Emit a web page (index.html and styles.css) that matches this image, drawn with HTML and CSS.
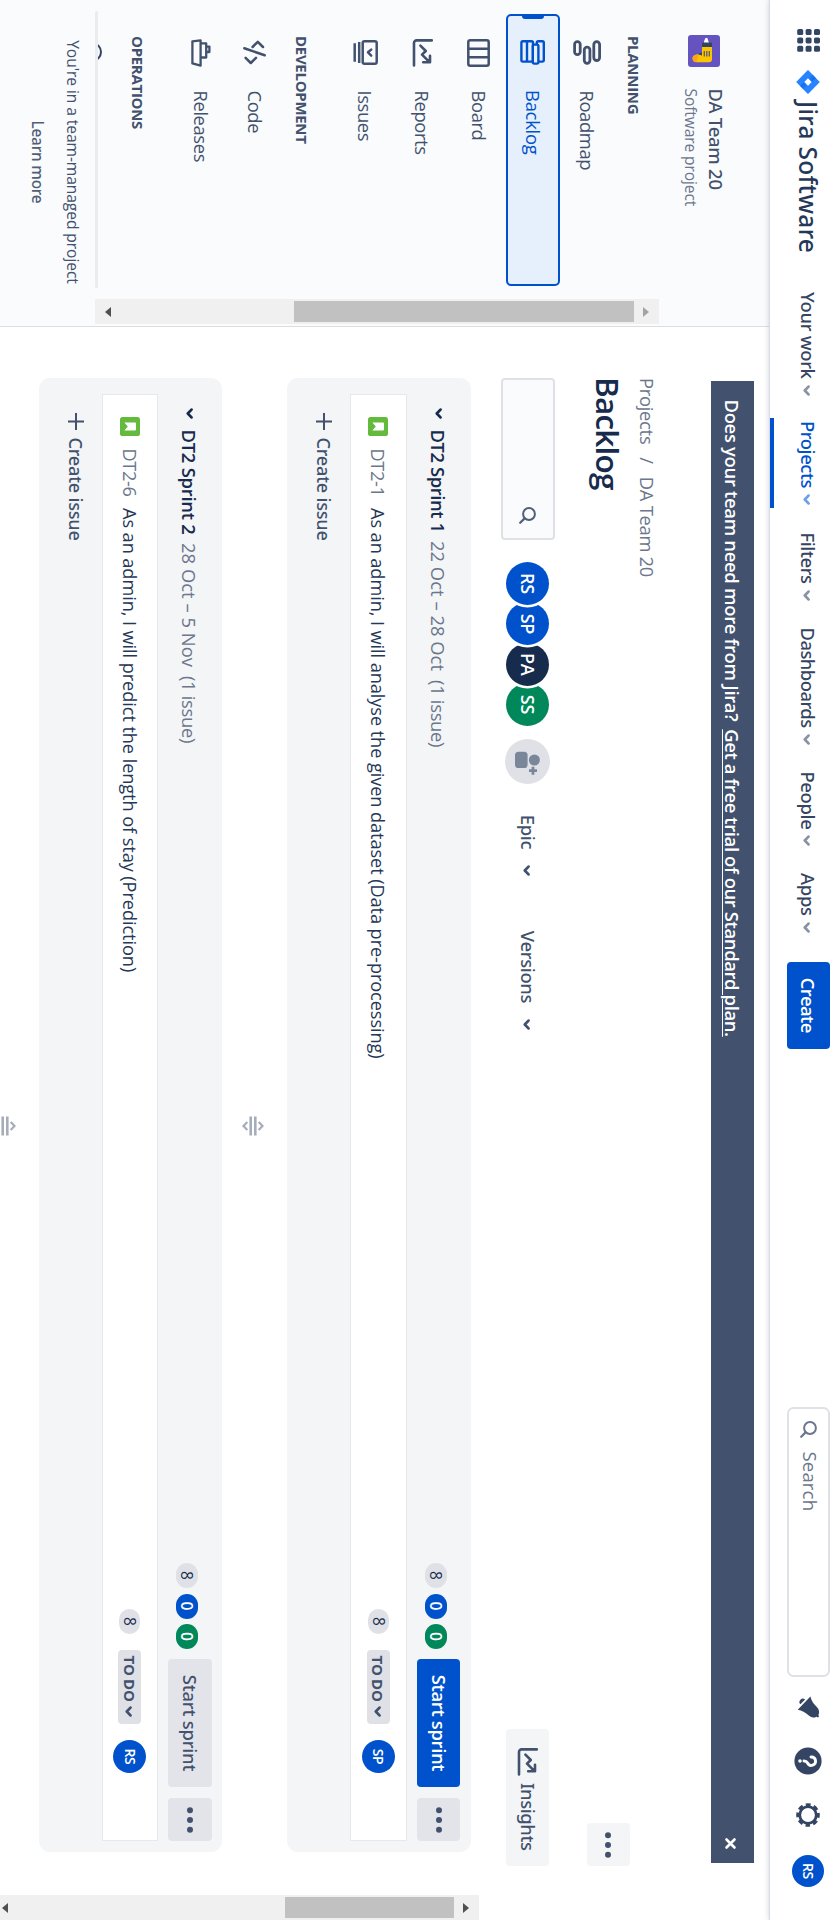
FILE: index.html
```html
<!DOCTYPE html>
<html lang="en">
<head>
<meta charset="utf-8">
<title>Backlog - DA Team 20</title>
<link rel="stylesheet" href="styles.css">
</head>
<body>
<svg class="defs" width="0" height="0" aria-hidden="true">
  <symbol id="chev" viewBox="0 0 11 7"><path d="M1.6 1.5 5.5 5.2 9.4 1.5" fill="none" stroke="currentColor" stroke-width="2.7" stroke-linecap="round" stroke-linejoin="round"/></symbol>
  <symbol id="search" viewBox="0 0 17 17"><circle cx="7" cy="7" r="5.9" fill="none" stroke="currentColor" stroke-width="2"/><path d="M11.4 11.4 15.8 15.8" stroke="currentColor" stroke-width="2.2" stroke-linecap="round"/></symbol>
  <symbol id="chart" viewBox="0 0 28 21"><path d="M1.4 1.2V16.4a2.6 2.6 0 0 0 2.6 2.6H26.4" fill="none" stroke="currentColor" stroke-width="2.6" stroke-linecap="round"/><path d="M6.6 12.6 12 7.2 15.6 11 22.6 4M16.8 3H23.3V9.8" fill="none" stroke="currentColor" stroke-width="2.6" stroke-linecap="round" stroke-linejoin="round"/></symbol>
  <symbol id="dots" viewBox="0 0 26 6"><g fill="currentColor"><circle cx="3.3" cy="3" r="3"/><circle cx="13" cy="3" r="3"/><circle cx="22.7" cy="3" r="3"/></g></symbol>
  <symbol id="plus" viewBox="0 0 17 16"><path d="M8.5 0V16M0 8H17" stroke="currentColor" stroke-width="2"/></symbol>
  <symbol id="story" viewBox="0 0 19 20"><rect width="19" height="20" rx="2.6" fill="#63ba3c"/><path d="M5.4 5a1 1 0 0 1 1-1h6.2a1 1 0 0 1 1 1V15.6L9.5 12.2 5.4 15.6Z" fill="#fff"/></symbol>
  <symbol id="handle" viewBox="0 0 20 24"><path d="M6 6.3 10 2.5 14 6.3M6 17.7 10 21.5 14 17.7" fill="none" stroke="currentColor" stroke-width="2.2"/><path d="M.6 9.7H19.4M.6 14.3H19.4" stroke="currentColor" stroke-width="2.6"/></symbol>
</svg>
<div class="screen">
  <header class="topbar">
    <svg class="apps" viewBox="0 0 23 23"><g fill="#344563"><rect width="6" height="6" rx="1.6"/><rect x="8.4" width="6" height="6" rx="1.6"/><rect x="16.8" width="6" height="6" rx="1.6"/><rect y="8.4" width="6" height="6" rx="1.6"/><rect x="8.4" y="8.4" width="6" height="6" rx="1.6"/><rect x="16.8" y="8.4" width="6" height="6" rx="1.6"/><rect y="16.8" width="6" height="6" rx="1.6"/><rect x="8.4" y="16.8" width="6" height="6" rx="1.6"/><rect x="16.8" y="16.8" width="6" height="6" rx="1.6"/></g></svg>
    <svg class="logo" viewBox="0 0 24 24">
      <defs><linearGradient id="g1" x1="1" y1="0" x2=".3" y2="1"><stop offset="0" stop-color="#0052cc"/><stop offset="1" stop-color="#2684ff"/></linearGradient><linearGradient id="g2" x1="0" y1="1" x2=".7" y2="0"><stop offset="0" stop-color="#0052cc"/><stop offset="1" stop-color="#2684ff"/></linearGradient></defs>
      <path d="M12 .2 23.4 11.4a.9.9 0 0 1 0 1.2L12 23.8.6 12.6a.9.9 0 0 1 0-1.2Z" fill="#2684ff"/>
      <path d="M12 8.2 8.2 12 4.6 7.4 8 4.200Z" fill="url(#g1)" opacity=".7"/>
      <path d="M12 15.8 15.8 12 19.4 16.6 16 19.800Z" fill="url(#g2)" opacity=".7"/>
      <path d="M12 8.3 15.7 12 12 15.7 8.3 12Z" fill="#fff"/>
    </svg>
    <span class="brand">Jira Software</span>
    <nav class="nav">
      <a class="n-work">Your work<svg class="chev"><use href="#chev"/></svg></a>
      <a class="n-projects active">Projects<svg class="chev"><use href="#chev"/></svg></a>
      <a class="n-filters">Filters<svg class="chev"><use href="#chev"/></svg></a>
      <a class="n-dash">Dashboards<svg class="chev"><use href="#chev"/></svg></a>
      <a class="n-people">People<svg class="chev"><use href="#chev"/></svg></a>
      <a class="n-apps">Apps<svg class="chev"><use href="#chev"/></svg></a>
    </nav>
    <button class="create">Create</button>
    <div class="search"><svg><use href="#search"/></svg><span>Search</span></div>
    <svg class="bell" viewBox="0 0 22 23"><path d="M.6 9.6C5 8.6 8 6.4 10.8 3.4 13.4.7 16.6.2 18.9 1.6L20.4 1l1 1-.7 1.6C22.4 6.400 21.600 9.300 19.100 11.800 16.100 14.800 14.600 17.800 13.700 22.300Z" fill="#344563"/><path d="M3.400 14.900 8.300 19.600A3.400 3.400 0 0 1 3.400 14.900Z" fill="#344563"/></svg>
    <svg class="help" viewBox="0 0 28 28"><circle cx="14" cy="14" r="13.600" fill="#344563"/><path d="M10 11A4.200 4.200 0 1 1 15.900 14.500Q14 15.500 14 18" fill="none" stroke="#fff" stroke-width="2.900" stroke-linecap="round"/><circle cx="14" cy="22" r="1.800" fill="#fff"/></svg>
    <svg class="gear" viewBox="0 0 24 24"><circle cx="12" cy="12" r="10" fill="none" stroke="#344563" stroke-width="3.600" stroke-dasharray="4.700 3.154" stroke-dashoffset="2.350"/><circle cx="12" cy="12" r="8.300" fill="none" stroke="#344563" stroke-width="2.800"/></svg>
    <span class="avatar me">RS</span>
  </header>
  <div class="body">
    <aside class="sidebar">
      <div class="project">
        <svg viewBox="0 0 32 32"><rect width="32" height="32" rx="3" fill="#6554c0"/><path d="M3 12.700 8 11v5H6.500L3 14.500Z" fill="#fff"/><rect x="7.600" y="8" width="5" height="10" rx="1" fill="#344563"/><path d="M12 8H24a3.300 3.300 0 0 1 3.300 3.300V24a4 4 0 0 1-4 3.500c-3 0-4.300-3.500-4.300-9.500H12Z" fill="#ffc400"/><path d="M19.200 21c.4 4 1.800 6.500 4.100 6.500a4 4 0 0 0 4-4Z" fill="#ff991f" opacity=".75"/><path d="M17.500 18h3l-1 3.600a4 4 0 0 1-2-3.600Z" fill="#344563"/><path d="M16 10.700H21.500M16 13.200H21.500M16 15.700H21.500" stroke="#505f79" stroke-width="1.300"/></svg>
        <div><strong>DA Team 20</strong><small>Software project</small></div>
      </div>
      <div class="side-scroll">
        <div class="menu">
          <h4 class="h-planning">PLANNING</h4>
          <a><i><svg width="26" height="28" viewBox="0 0 26 28" fill="none" stroke="currentColor" stroke-width="2.800"><rect x="1.700" y="1.400" width="18.800" height="5.800" rx="2.900"/><rect x="7.200" y="11.100" width="16.200" height="5.600" rx="2.800"/><rect x="1.700" y="20.800" width="13" height="5.600" rx="2.800"/></svg></i>Roadmap</a>
          <a class="current"><i><svg width="25" height="25" viewBox="0 0 25 25" fill="#e6effc" stroke="currentColor" stroke-width="2.400"><rect x="1.200" y="12" width="20.400" height="11.600" rx="1.500"/><path d="M1.200 18H21.600"/><rect x="1.200" y="1.200" width="20.400" height="7" rx="1.500"/><rect x="4.600" y="6.600" width="19" height="5.600" rx="1.500"/></svg></i>Backlog</a>
          <a><i><svg width="28" height="23" viewBox="0 0 28 23" fill="none" stroke="currentColor" stroke-width="2.500"><rect x="1.300" y="1.300" width="25.400" height="20.400" rx="2"/><path d="M9.800 1V22M18.200 1V22"/></svg></i>Board</a>
          <a class="reports"><i><svg width="28" height="21"><use href="#chart"/></svg></i>Reports</a>
          <a class="issues"><i><svg width="25" height="25" viewBox="0 0 25 25" fill="none" stroke="currentColor" stroke-width="2.500"><rect x="1.300" y="1.300" width="22.400" height="14" rx="1.800"/><path d="M9.600 6.800 12.300 10 15.600 6.800" stroke-linecap="round" stroke-linejoin="round"/><path d="M2 18.800H23M3.300 23.300H21.700"/></svg></i>Issues</a>
          <h4 class="h-dev">DEVELOPMENT</h4>
          <a><i><svg width="25" height="23" viewBox="0 0 25 23" fill="none" stroke="currentColor" stroke-width="2.500" stroke-linecap="round" stroke-linejoin="round"><path d="M7 3 1.800 8.200 7 13.400M17.800 10 23 15.200 17.800 20.400M15.300 1.300 8.200 21.700"/></svg></i>Code</a>
          <a><i><svg width="28" height="20" viewBox="0 0 28 20" fill="none" stroke="currentColor" stroke-width="2.300" stroke-linejoin="round"><path d="M1.300 10.400H26.700L24.400 18.600H2.300Z"/><path d="M4.400 10V4.800H18.500V10M7.600 4.500V1.600H13V4.500"/></svg></i>Releases</a>
          <h4 class="h-ops">OPERATIONS</h4>
          <div class="peek"></div>
        </div>
        <div class="scrollbar"><b class="up faint"></b><b class="thumb"></b><b class="down"></b></div>
      </div>
      <div class="rule"></div>
      <footer><p>You're in a team-managed project</p><a>Learn more</a></footer>
    </aside>
    <main class="main">
      <div class="banner"><span>Does your team need more from Jira?</span><a>Get a free trial of our Standard plan.</a><svg viewBox="0 0 11 11"><path d="M1.500 1.500 9.500 9.500M9.500 1.500 1.500 9.500" stroke="#fff" stroke-width="2.600" stroke-linecap="round"/></svg></div>
      <div class="crumbs"><span>Projects</span><span>/</span><span>DA Team 20</span></div>
      <div class="title"><h1>Backlog</h1><button class="square"><svg><use href="#dots"/></svg></button></div>
      <div class="controls">
        <div class="filter"><svg><use href="#search"/></svg></div>
        <div class="stack"><span class="avatar">RS</span><span class="avatar">SP</span><span class="avatar navy">PA</span><span class="avatar green">SS</span></div>
        <svg class="add" viewBox="0 0 45 45"><circle cx="22.500" cy="22.500" r="22.500" fill="#dfe1e6"/><g fill="#7a869a"><circle cx="21" cy="15.600" r="5.500"/><rect x="12.700" y="22.400" width="16.400" height="12.600" rx="3.600"/></g><path d="M31.700 13v8M27.700 17h8" stroke="#7a869a" stroke-width="2.800"/></svg>
        <span class="drop epic">Epic<svg class="chev"><use href="#chev"/></svg></span>
        <span class="drop versions">Versions<svg class="chev"><use href="#chev"/></svg></span>
        <button class="insights"><svg><use href="#chart"/></svg>Insights</button>
      </div>
      <div class="lists">
        <div class="column">
          <section class="sprint">
            <div class="sprint-head">
              <svg class="chev"><use href="#chev"/></svg><h2>DT2 Sprint 1</h2><span class="date">22 Oct – 28 Oct</span><span class="count">(1 issue)</span>
              <div class="tail"><span class="pill">8</span><span class="pill blue">0</span><span class="pill green">0</span><button class="start primary">Start sprint</button><button class="square grey"><svg><use href="#dots"/></svg></button></div>
            </div>
            <div class="issue">
              <svg class="type"><use href="#story"/></svg><span class="key">DT2-1</span><span class="summary">As an admin, I will analyse the given dataset (Data pre-processing)</span>
              <div class="tail"><span class="pill">8</span><span class="status">TO DO<svg class="chev"><use href="#chev"/></svg></span><span class="avatar">SP</span></div>
            </div>
            <div class="new"><svg><use href="#plus"/></svg>Create issue</div>
          </section>
          <div class="gap"><svg><use href="#handle"/></svg></div>
          <section class="sprint second">
            <div class="sprint-head">
              <svg class="chev"><use href="#chev"/></svg><h2>DT2 Sprint 2</h2><span class="date">28 Oct – 5 Nov</span><span class="count">(1 issue)</span>
              <div class="tail"><span class="pill">8</span><span class="pill blue">0</span><span class="pill green">0</span><button class="start">Start sprint</button><button class="square grey"><svg><use href="#dots"/></svg></button></div>
            </div>
            <div class="issue">
              <svg class="type"><use href="#story"/></svg><span class="key">DT2-6</span><span class="summary">As an admin, I will predict the length of stay (Prediction)</span>
              <div class="tail"><span class="pill">8</span><span class="status">TO DO<svg class="chev"><use href="#chev"/></svg></span><span class="avatar">RS</span></div>
            </div>
            <div class="new"><svg><use href="#plus"/></svg>Create issue</div>
          </section>
          <div class="gap"><svg><use href="#handle"/></svg></div>
        </div>
        <div class="scrollbar"><b class="up"></b><b class="thumb"></b><b class="down"></b></div>
      </div>
    </main>
  </div>
</div>
</body>
</html>
```

FILE: styles.css
```css
* { box-sizing: border-box; margin: 0; padding: 0; }
html, body { width: 831px; height: 1920px; overflow: hidden; background: #fff; }
.defs { display: none; }
svg { display: block; flex: none; overflow: visible; }
button { border: 0; font: inherit; color: inherit; display: flex; align-items: center; justify-content: center; }
a { color: inherit; }

/* The whole landscape app is turned a quarter clockwise */
.screen {
  width: 1920px; height: 831px;
  transform-origin: 0 0; transform: translateX(831px) rotate(90deg);
  display: flex; flex-direction: column; overflow: hidden;
  font: 400 18px/24px "Open Sans", "Noto Sans", sans-serif; color: #42526e; white-space: nowrap;
}
.chev { width: 11px; height: 7px; }

.topbar { height: 61px; flex: none; padding: 1px 0 17px 29px; display: flex; align-items: center; background: #fff; position: relative; z-index: 2; box-shadow: 0 1px 1px #d9dce2, 0 2px 5px rgba(9, 30, 66, .13); }
.apps { width: 23px; height: 23px; }
.logo { width: 24px; height: 24px; margin-left: 18px; }
.brand { width: 192px; margin-left: 7px; font: 500 24.500px/32px "Noto Sans", sans-serif; letter-spacing: .3px; color: #253858; }
.nav { display: flex; margin-left: -1px; height: 43px; font-family: "Noto Sans", sans-serif; font-size: 18.400px; font-weight: 500; letter-spacing: -.42px; color: #344563; }
.nav a { display: flex; align-items: center; height: 43px; padding-top: 0; }
.nav .chev { color: #8993a4; margin-left: 6px; margin-top: 3px; }
.nav .n-work { width: 129px; letter-spacing: -.3px; }
.nav .n-projects { width: 111.500px; }
.nav .n-filters { width: 95px; }
.nav .n-dash { width: 144px; letter-spacing: -.52px; }
.nav .n-people { width: 101.500px; letter-spacing: -.35px; }
.nav .n-apps { width: 89px; letter-spacing: -.25px; }
.nav .active { color: #0052cc; position: relative; }
.nav .active .chev { color: #6d9fe8; }
.nav .active::after { content: ""; position: absolute; left: -3px; top: 56px; width: 90px; height: 4px; background: #0052cc; }
.create { width: 86.500px; height: 43px; background: #0052cc; color: #fff; border-radius: 4px; font-weight: 600; font-size: 18.400px; letter-spacing: -.65px; }
.search { width: 269.500px; height: 43px; margin-left: 358.500px; border: 2px solid #dfe1e6; border-radius: 6.500px; display: flex; align-items: center; padding-left: 12px; color: #6b778c; font-size: 18.670px; letter-spacing: .1px; }
.search svg { width: 17px; height: 17px; margin-right: 13.500px; }
.search span { margin-top: -3px; }
.bell { width: 22px; height: 23px; margin-left: 19.500px; }
.help { width: 28px; height: 28px; margin-left: 29px; }
.gear { width: 24px; height: 24px; margin-left: 28px; }
.avatar { flex: none; border-radius: 50%; background: #0052cc; color: #fff; display: flex; align-items: center; justify-content: center; font-weight: 600; }
.avatar.me { width: 32px; height: 32px; margin-left: 28px; font-size: 14px; letter-spacing: -.4px; }

.body { flex: 1; min-height: 0; display: flex; }
.sidebar { width: 327px; flex: none; background: #fafbfc; border-right: 1.500px solid #dddee1; display: flex; flex-direction: column; }
.project { height: 111px; padding: 42px 0 0 35px; display: flex; align-items: flex-start; }
.project svg { width: 32px; height: 32px; margin-top: 8px; margin-right: 21.500px; }
.project strong { display: block; font: 500 18.400px/24px "Noto Sans", sans-serif; letter-spacing: -.2px; }
.project small { display: block; font-size: 15.600px; line-height: 24px; color: #6b778c; margin-top: 1px; letter-spacing: -.12px; }
.side-scroll { height: 564px; flex: none; display: flex; overflow: hidden; }
.menu { width: 299px; flex: none; padding-left: 14px; display: flex; flex-direction: column; }
.menu h4 { font-size: 15px; line-height: 20px; font-weight: 700; letter-spacing: -.3px; padding-left: 22px; flex: none; }
.h-planning { height: 45px; padding-top: 15px; }
.h-dev { height: 56px; padding-top: 26px; }
.h-ops { height: 72px; padding-top: 26px; }
.menu a { height: 54px; width: 272px; flex: none; display: flex; align-items: center; font-size: 18.400px; letter-spacing: -.4px; }
.menu a.reports { height: 59px; }
.menu a.issues { height: 55px; }
.menu i { width: 76.500px; height: 28px; flex: none; display: flex; align-items: center; padding-left: 26px; }
.menu i svg[width="28"] { margin-left: -1.500px; }
.menu .current { border: 2.500px solid #0052cc; border-radius: 5px; background: #e6effc; color: #0052cc; letter-spacing: -.25px; position: relative; }
.menu .current i { padding-left: 23.500px; width: 74px; }
.menu .current::before { content: ""; position: absolute; left: 0; top: 14px; width: 2.500px; height: 22px; background: #0052cc; border-radius: 0 3px 3px 0; }
.peek { width: 20px; height: 20px; margin-left: 28px; border: 2.600px solid #344563; border-radius: 50%; flex: none; }
.scrollbar { width: 25px; flex: none; background: #f0f0f0; display: flex; flex-direction: column; align-items: center; padding: 10px 0; }
.scrollbar .up { border: 5.500px solid transparent; border-top: 0; border-bottom: 6px solid #505050; }
.scrollbar .faint { border-bottom-color: #a3a3a3; }
.scrollbar .down { border: 5.500px solid transparent; border-bottom: 0; border-top: 6px solid #505050; margin-top: auto; }
.scrollbar .thumb { width: 21px; height: 340px; margin-top: 9px; background: #c1c1c1; }
.rule { height: 3px; flex: none; margin: -3px 0 0 11px; width: 277px; background: #ebecf0; border-radius: 2px; position: relative; }
footer { text-align: center; padding-top: 10px; width: 324px; font-size: 15.600px; letter-spacing: -.08px; }
footer p { line-height: 24px; }
footer a { display: block; margin-top: 12px; font-family: "Noto Sans", sans-serif; font-weight: 500; font-size: 15.400px; letter-spacing: -.2px; color: #505f79; }

.main { flex: 1; min-width: 0; padding: 16px 0 0 51px; display: flex; flex-direction: column; }
.banner { width: 1481.500px; height: 43px; flex: none; margin-left: 3px; background: #42526e; color: #fff; font-weight: 600; font-size: 18.400px; letter-spacing: -.3px; display: flex; align-items: center; padding: 0 14px 0 18.500px; }
.banner a { margin-left: 8px; text-decoration: underline; text-underline-offset: 2px; text-decoration-thickness: 1.300px; letter-spacing: -.36px; }
.banner svg { width: 11px; height: 11px; margin: 4px 0 0 auto; }
.crumbs { margin-top: 52px; height: 24px; display: flex; flex: none; color: #6b778c; font-size: 18.400px; letter-spacing: -.3px; }
.crumbs span:nth-child(2) { margin: 0 13px 0 13px; }
.title { height: 43px; flex: none; margin-top: 5px; width: 1488px; display: flex; align-items: center; justify-content: space-between; }
h1 { font-size: 31.500px; line-height: 40px; font-weight: 600; letter-spacing: -.8px; color: #172b4d; margin-top: 0; margin-left: -1px; }
.square { width: 43px; height: 43px; background: #f4f5f7; border-radius: 4px; color: #42526e; }
.square.grey { background: #e2e4e9; }
.square svg { width: 26px; height: 6px; }
.controls { width: 1488px; height: 54px; margin-top: 32px; flex: none; display: flex; align-items: center; }
.filter { width: 162px; height: 54px; border: 2px solid #dfe1e6; border-radius: 4px; background: #fafbfc; display: flex; align-items: center; justify-content: flex-end; padding-right: 14.500px; color: #505f79; }
.filter svg { width: 17px; height: 17px; }
.stack { display: flex; margin-left: 22px; }
.stack .avatar { width: 43px; height: 43px; margin-right: -2.700px; font-size: 18px; letter-spacing: -.3px; position: relative; z-index: 1; box-shadow: 0 0 0 2.500px #fff; }
.stack .avatar:nth-child(1) { z-index: 4; }
.stack .avatar:nth-child(2) { z-index: 3; }
.stack .avatar:nth-child(3) { z-index: 2; }
.avatar.navy { background: #172b4d; }
.avatar.green, .pill.green { background: #00875a; }
.add { width: 45px; height: 45px; margin-left: 15.500px; }
.drop { display: flex; align-items: center; font: 500 18.400px/24px "Noto Sans", sans-serif; letter-spacing: -.3px; }
.drop .chev { margin-left: 16px; margin-top: 2px; }
.epic { margin-left: 31px; width: 116px; }
.insights { width: 137px; height: 43px; margin-left: auto; background: #f4f5f7; border-radius: 4px; font: 500 18.400px/24px "Noto Sans", sans-serif; letter-spacing: -.4px; justify-content: flex-start; padding-left: 18.500px; }
.insights svg { width: 28px; height: 21px; margin-right: 7.500px; }

.lists { flex: 1; min-height: 0; margin-top: 22px; display: flex; justify-content: space-between; overflow: hidden; }
.lists .scrollbar .thumb { height: 169px; }
.lists .scrollbar { padding-bottom: 2px; }
.column { width: 1474px; padding-top: 8px; }
.sprint { height: 184px; background: #f4f5f7; border-radius: 11px; padding: 0 11px 12px 16px; display: flex; flex-direction: column; }
.sprint.second { height: 183px; }
.sprint-head { height: 64px; flex: none; display: flex; align-items: center; padding-left: 13.500px; color: #172b4d; }
.sprint-head h2, .sprint-head .date, .sprint-head .count { font-size: 18.400px; line-height: 24px; margin-top: 1px; }
.sprint-head h2 { font-weight: 600; letter-spacing: -.42px; margin-left: 11px; }
.sprint-head .date { margin-left: 8.500px; letter-spacing: .02px; color: #6b778c; }
.second h2 { letter-spacing: -.25px; }
.sprint-head .count { margin-left: 9px; letter-spacing: -.3px; color: #6b778c; }
.tail { margin-left: auto; display: flex; align-items: center; }
.pill { width: 25px; height: 22px; border-radius: 11px; background: #dfe1e6; color: #172b4d; font-size: 15.500px; line-height: 22px; text-align: center; }
.sprint-head .pill { margin: 5px 5.500px 0 0; }
.pill.blue { background: #0052cc; color: #fff; font-weight: 600; }
.pill.green { color: #fff; font-weight: 600; }
.start { width: 128px; height: 43px; margin-left: 4.500px; margin-right: 11px; padding-bottom: 1px; border-radius: 4px; background: #e2e4e9; color: #42526e; font: 500 18.400px/24px "Noto Sans", sans-serif; letter-spacing: -.2px; }
.start.primary { background: #0052cc; color: #fff; font: 600 18.400px/24px "Open Sans", sans-serif; letter-spacing: -.32px; }
.second .start, .second .square { height: 44px; }
.issue { height: 57px; flex: none; background: #fff; border: 1px solid #e6e8ee; display: flex; align-items: center; padding: 0 67px 0 22px; color: #253858; font-size: 18.200px; letter-spacing: -.09px; }
.second .issue { height: 56px; }
.type { width: 19px; height: 20px; }
.key { width: 59.500px; margin-left: 12.500px; letter-spacing: -.35px; color: #6b778c; }
.issue .pill { margin-right: 16px; height: 21px; line-height: 21px; }
.status { width: 74px; height: 23px; border-radius: 4px; background: #dfe1e6; color: #42526e; font-size: 15px; font-weight: 700; letter-spacing: -.3px; display: flex; align-items: center; padding-left: 5.500px; }
.status .chev { margin-left: 4px; margin-top: 2px; }
.issue .avatar { width: 33px; height: 33px; margin-left: 16px; font-size: 14px; letter-spacing: -.4px; }
.new { flex: 1; display: flex; align-items: center; padding-left: 18.500px; font-family: "Noto Sans", sans-serif; font-weight: 500; letter-spacing: -.17px; }
.new svg { width: 17px; height: 16px; margin-right: 8px; }
.gap { height: 65px; display: flex; justify-content: center; padding-top: 21.500px; color: #a5adba; }
.gap svg { width: 20px; height: 24px; margin-left: 21px; }
```
